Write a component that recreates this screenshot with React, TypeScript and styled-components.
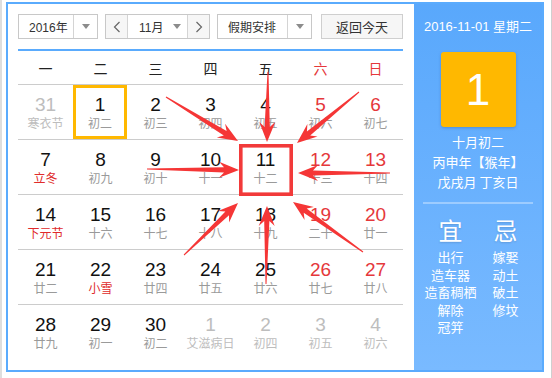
import React from "react";
import styled, { createGlobalStyle } from "styled-components";

const GlobalStyle = createGlobalStyle`
  html, body { margin: 0; padding: 0; background: #fff; }
  body { font-family: "Liberation Sans", "Noto Sans CJK SC", sans-serif; }
  * { box-sizing: border-box; }
`;

const Page = styled.div`
  position: relative;
  width: 552px;
  height: 378px;
  padding: 2px 0 0 4px;
  border-left: 2px solid #dedede;
  border-right: 1px solid #cfcfcf;
  overflow: hidden;
`;

const Frame = styled.div`
  width: 538px;
  height: 370px;
  border: 2px solid #5aabfd;
  display: flex;
`;

const Main = styled.div`
  flex: 1;
  padding: 10px 11px 0 10px;
  display: flex;
  flex-direction: column;
`;

const Toolbar = styled.div`
  display: flex;
  height: 25px;
  font-size: 12px;
  color: #333;
`;

const Select = styled.div<{ $w: number; $ml?: number }>`
  width: ${(p) => p.$w}px;
  margin-left: ${(p) => p.$ml ?? 0}px;
  height: 25px;
  border: 1px solid #c8c8c8;
  display: flex;
  background: #fff;
`;

const SelectText = styled.div`
  flex: 1;
  display: flex;
  align-items: center;
  padding-left: 10px;
  white-space: nowrap;
`;

const SelectArrow = styled.div`
  width: 24px;
  border-left: 1px solid #d4d4d4;
  display: flex;
  align-items: center;
  justify-content: center;
  &::after {
    content: "";
    border-left: 4px solid transparent;
    border-right: 4px solid transparent;
    border-top: 5px solid #8c8c8c;
  }
`;

const MonthGroup = styled.div`
  width: 105px;
  margin-left: 7px;
  height: 25px;
  border: 1px solid #c8c8c8;
  display: flex;
`;

const NavBtn = styled.div<{ $side: "l" | "r" }>`
  width: 22px;
  background: #f6f6f6;
  display: flex;
  align-items: center;
  justify-content: center;
  ${(p) => (p.$side === "l" ? "border-right: 1px solid #d4d4d4;" : "border-left: 1px solid #d4d4d4;")}
`;

const MonthMid = styled.div`
  flex: 1;
  display: flex;
  align-items: center;
  padding-left: 11px;
  gap: 10px;
  &::after {
    content: "";
    border-left: 4px solid transparent;
    border-right: 4px solid transparent;
    border-top: 5px solid #8c8c8c;
  }
`;

const TodayBtn = styled.div`
  width: 82px;
  margin-left: 9px;
  height: 25px;
  border: 1px solid #cfcfcf;
  background: #f6f6f6;
  display: flex;
  align-items: center;
  justify-content: center;
  font-size: 13px;
  color: #333;
`;

const BlueRule = styled.div`
  height: 2px;
  background: #5aabfd;
  margin-top: 10px;
`;

const WeekHeader = styled.div`
  display: grid;
  grid-template-columns: repeat(7, 55px);
  height: 34px;
  border-bottom: 1px solid #cccccc;
  align-items: center;
  padding-top: 1px;
`;

const WeekDay = styled.div<{ $red?: boolean }>`
  text-align: center;
  font-size: 14px;
  font-family: "Noto Sans CJK SC", sans-serif;
  color: ${(p) => (p.$red ? "#e5383b" : "#222")};
`;

const Row = styled.div<{ $last?: boolean }>`
  display: grid;
  grid-template-columns: repeat(7, 55px);
  height: 55px;
  border-bottom: ${(p) => (p.$last ? "none" : "1px solid #cccccc")};
`;

const Cell = styled.div<{ $today?: boolean }>`
  display: flex;
  flex-direction: column;
  align-items: center;
  padding-top: 9px;
  margin-right: ${(p) => (p.$today ? "1px" : "0")};
  box-shadow: ${(p) => (p.$today ? "inset 0 0 0 3px #ffb800" : "none")};
`;

const Num = styled.div<{ $tone: "n" | "w" | "o" }>`
  font-size: 19px;
  line-height: 22px;
  color: ${(p) => (p.$tone === "w" ? "#e5383b" : p.$tone === "o" ? "#bdbdbd" : "#111")};
`;

const Lunar = styled.div<{ $tone: "n" | "f" | "o" }>`
  font-size: 12px;
  line-height: 14px;
  font-family: "Noto Sans CJK SC", sans-serif;
  white-space: nowrap;
  color: ${(p) => (p.$tone === "f" ? "#e02b2b" : p.$tone === "o" ? "#bdbdbd" : "#9a9a9a")};
`;

const Side = styled.div`
  width: 128px;
  background: linear-gradient(180deg, #59a8fc 0%, #6bb2fe 55%, #79baff 100%);
  display: flex;
  flex-direction: column;
  align-items: center;
  padding-top: 13px;
  color: #fff;
  font-family: "Noto Sans CJK SC", sans-serif;
`;

const SideDate = styled.div`
  font-size: 13px;
  line-height: 20px;
  font-family: "Liberation Sans", "Noto Sans CJK SC", sans-serif;
  white-space: nowrap;
`;

const DayBox = styled.div`
  width: 75px;
  height: 75px;
  margin-top: 15px;
  border-radius: 3px;
  background: #ffb800;
  box-shadow: 0 1px 3px rgba(40, 80, 140, 0.35);
  display: flex;
  align-items: center;
  justify-content: center;
  font-family: "Liberation Sans", sans-serif;
  font-size: 44px;
`;

const LunarInfo = styled.div`
  margin-top: 5px;
  font-size: 13px;
  line-height: 20px;
  text-align: center;
  white-space: nowrap;
`;

const SideRule = styled.div`
  width: 110px;
  height: 2px;
  margin-top: 10px;
  background: #9dccff;
`;

const YiJi = styled.div`
  display: grid;
  grid-template-columns: 55px 55px;
  margin-top: 11px;
`;

const YiJiCol = styled.div`
  display: flex;
  flex-direction: column;
  align-items: center;
`;

const YiJiHead = styled.div`
  font-size: 24px;
  line-height: 30px;
  margin-bottom: 3px;
  text-shadow: 0 1px 2px rgba(0, 0, 0, 0.15);
`;

const YiJiItem = styled.div`
  font-size: 13px;
  line-height: 17.6px;
  white-space: nowrap;
`;

const Overlay = styled.svg`
  position: absolute;
  left: 0;
  top: 0;
  pointer-events: none;
`;

type Day = { n: number; l: string; o?: boolean; f?: boolean; today?: boolean };

const weeks: Day[][] = [
  [
    { n: 31, l: "寒衣节", o: true },
    { n: 1, l: "初二", today: true },
    { n: 2, l: "初三" },
    { n: 3, l: "初四" },
    { n: 4, l: "初五" },
    { n: 5, l: "初六" },
    { n: 6, l: "初七" },
  ],
  [
    { n: 7, l: "立冬", f: true },
    { n: 8, l: "初九" },
    { n: 9, l: "初十" },
    { n: 10, l: "十一" },
    { n: 11, l: "十二" },
    { n: 12, l: "十三" },
    { n: 13, l: "十四" },
  ],
  [
    { n: 14, l: "下元节", f: true },
    { n: 15, l: "十六" },
    { n: 16, l: "十七" },
    { n: 17, l: "十八" },
    { n: 18, l: "十九" },
    { n: 19, l: "二十" },
    { n: 20, l: "廿一" },
  ],
  [
    { n: 21, l: "廿二" },
    { n: 22, l: "小雪", f: true },
    { n: 23, l: "廿四" },
    { n: 24, l: "廿五" },
    { n: 25, l: "廿六" },
    { n: 26, l: "廿七" },
    { n: 27, l: "廿八" },
  ],
  [
    { n: 28, l: "廿九" },
    { n: 29, l: "初一" },
    { n: 30, l: "初二" },
    { n: 1, l: "艾滋病日", o: true },
    { n: 2, l: "初四", o: true },
    { n: 3, l: "初五", o: true },
    { n: 4, l: "初六", o: true },
  ],
];

const weekNames = ["一", "二", "三", "四", "五", "六", "日"];

function arrowPoints(tx: number, ty: number, hx: number, hy: number): string {
  const dx = hx - tx;
  const dy = hy - ty;
  const L = Math.hypot(dx, dy);
  const ux = dx / L;
  const uy = dy / L;
  const px = -uy;
  const py = ux;
  const at = (d: number, w: number) => `${(tx + ux * d + px * w).toFixed(1)},${(ty + uy * d + py * w).toFixed(1)}`;
  return [
    at(0, 0.5),
    at(L - 15, 2.6),
    at(L - 20, 8),
    at(L, 0),
    at(L - 20, -8),
    at(L - 15, -2.6),
    at(0, -0.5),
  ].join(" ");
}

const arrows: [number, number, number, number][] = [
  [164, 97, 236, 141],
  [266, 72, 265, 142],
  [357, 92, 295, 143],
  [145, 169, 237, 170],
  [388, 173, 296, 173],
  [182, 255, 236, 203],
  [264, 284, 265, 206],
  [361, 252, 291, 202],
];

const Chevron = ({ dir }: { dir: "l" | "r" }) => (
  <svg width="8" height="12" viewBox="0 0 8 12">
    <polyline
      points={dir === "l" ? "6.5,1 1.5,6 6.5,11" : "1.5,1 6.5,6 1.5,11"}
      fill="none"
      stroke="#666"
      strokeWidth="1.2"
    />
  </svg>
);

export default function App() {
  return (
    <>
      <GlobalStyle />
      <Page>
        <Frame>
          <Main>
            <Toolbar>
              <Select $w={80}>
                <SelectText>2016年</SelectText>
                <SelectArrow />
              </Select>
              <MonthGroup>
                <NavBtn $side="l">
                  <Chevron dir="l" />
                </NavBtn>
                <MonthMid>11月</MonthMid>
                <NavBtn $side="r">
                  <Chevron dir="r" />
                </NavBtn>
              </MonthGroup>
              <Select $w={95} $ml={7}>
                <SelectText>假期安排</SelectText>
                <SelectArrow />
              </Select>
              <TodayBtn>返回今天</TodayBtn>
            </Toolbar>
            <BlueRule />
            <WeekHeader>
              {weekNames.map((w, i) => (
                <WeekDay key={w} $red={i >= 5}>
                  {w}
                </WeekDay>
              ))}
            </WeekHeader>
            {weeks.map((week, wi) => (
              <Row key={wi} $last={wi === weeks.length - 1}>
                {week.map((d, di) => (
                  <Cell key={di} $today={d.today}>
                    <Num $tone={d.o ? "o" : di >= 5 ? "w" : "n"}>{d.n}</Num>
                    <Lunar $tone={d.o ? "o" : d.f ? "f" : "n"}>{d.l}</Lunar>
                  </Cell>
                ))}
              </Row>
            ))}
          </Main>
          <Side>
            <SideDate>2016-11-01 星期二</SideDate>
            <DayBox>1</DayBox>
            <LunarInfo>
              <div>十月初二</div>
              <div>丙申年【猴年】</div>
              <div>戊戌月 丁亥日</div>
            </LunarInfo>
            <SideRule />
            <YiJi>
              <YiJiCol>
                <YiJiHead>宜</YiJiHead>
                {["出行", "造车器", "造畜稠栖", "解除", "冠笄"].map((t) => (
                  <YiJiItem key={t}>{t}</YiJiItem>
                ))}
              </YiJiCol>
              <YiJiCol>
                <YiJiHead>忌</YiJiHead>
                {["嫁娶", "动土", "破土", "修坟"].map((t) => (
                  <YiJiItem key={t}>{t}</YiJiItem>
                ))}
              </YiJiCol>
            </YiJi>
          </Side>
        </Frame>
        <Overlay width="552" height="378" viewBox="0 0 552 378">
          <rect x="238.8" y="145.8" width="50.4" height="48.4" fill="none" stroke="#f23a3a" strokeWidth="3.6" />
          {arrows.map((a, i) => (
            <polygon key={i} points={arrowPoints(...a)} fill="#f53636" />
          ))}
        </Overlay>
      </Page>
    </>
  );
}
